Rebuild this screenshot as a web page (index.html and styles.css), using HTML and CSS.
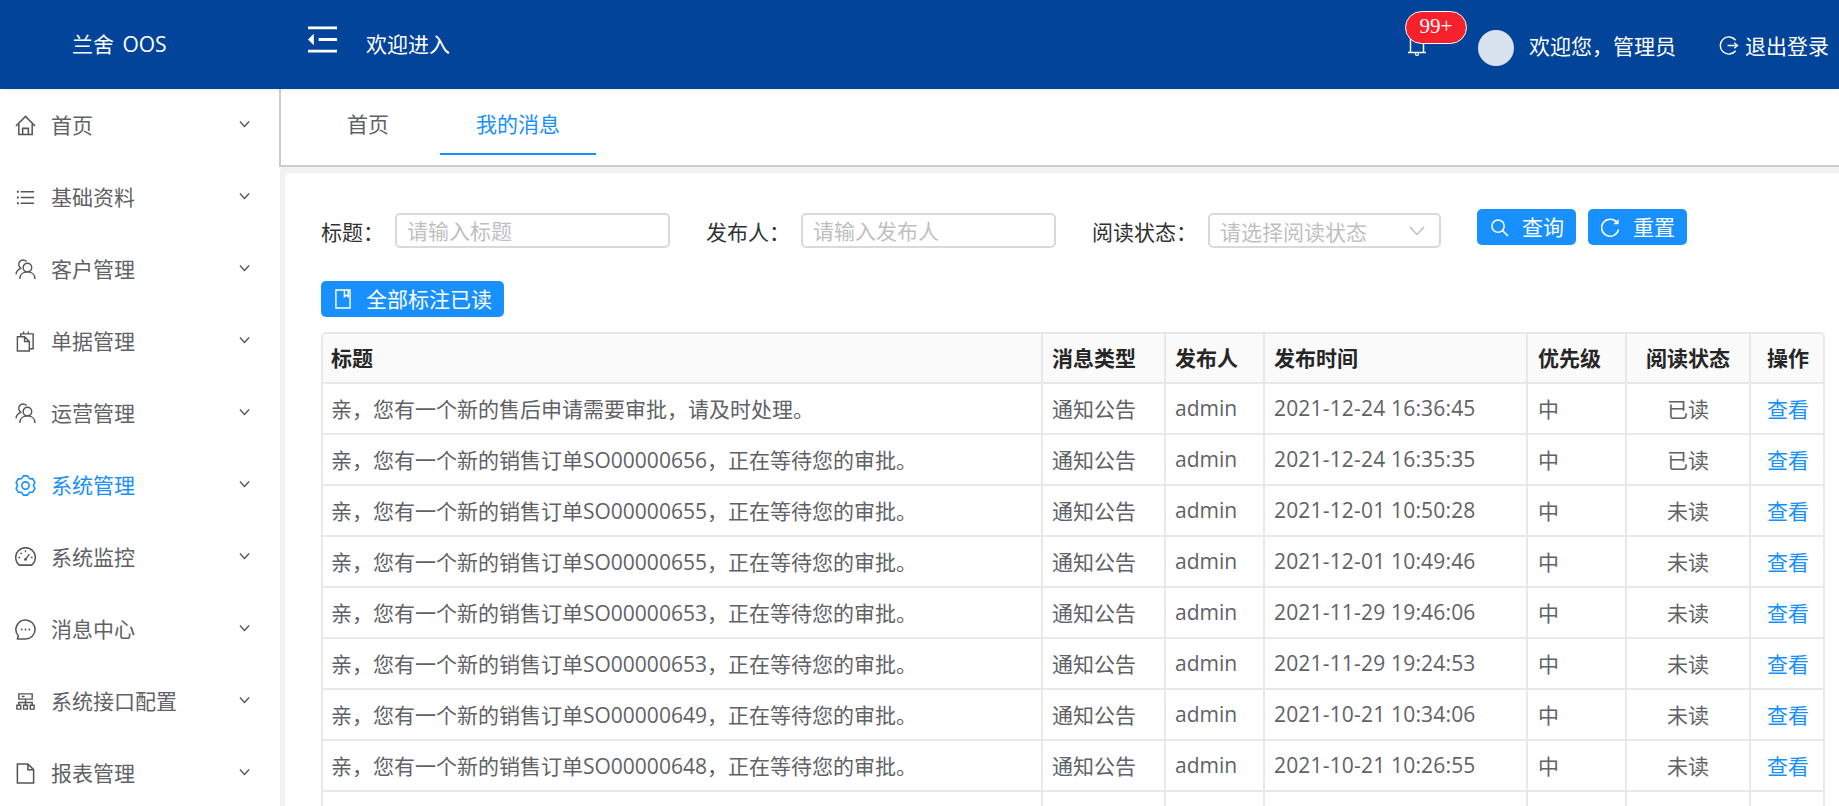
FILE: index.html
```html
<!DOCTYPE html>
<html lang="zh-CN">
<head>
<meta charset="utf-8">
<title>兰舍 OOS</title>
<link rel="stylesheet" href="styles.css">
</head>
<body>
<svg class="defs" width="0" height="0" aria-hidden="true">
  <symbol id="chev" viewBox="0 0 12 8"><path d="M1 1.2 6 6.6 11 1.2" fill="none" stroke="currentColor" stroke-width="1.5"/></symbol>
  <symbol id="users" viewBox="0 0 22 22"><circle cx="13" cy="9" r="4.5" fill="none" stroke="currentColor" stroke-width="1.5"/><path d="M5 21c0-5 3.500-7.500 8-7.500s8 2.500 8 7.500M12 2.600C11 1.500 9.500 1 8.500 1 5.500 1 3.500 3.500 4 6.500c.3 1.500 1 2.500 2 3.300C3 11 1.500 13 1 16" fill="none" stroke="currentColor" stroke-width="1.5"/></symbol>
</svg>
<header class="topbar">
  <div class="logo">兰舍 OOS</div>
  <svg class="fold" viewBox="0 0 30 27"><path d="M0 1.5H30M11 13.5H30M0 25.5H30" fill="none" stroke="#fff" stroke-width="3"/><path d="M6 7.5 0 13.500 6 19.500Z" fill="#fff"/></svg>
  <div class="welcome">欢迎进入</div>
  <div class="top-right">
    <div class="bell-wrap">
      <svg class="bell" viewBox="0 0 18 18"><path d="M2.500 0V14.500M15.500 0V14.500M0 14.500H18" fill="none" stroke="#fff" stroke-width="1.5"/><circle cx="9" cy="16" r="1.500" fill="none" stroke="#fff" stroke-width="1.200"/></svg>
      <span class="badge">99+</span>
    </div>
    <span class="avatar"></span>
    <span class="user">欢迎您，管理员</span>
    <svg class="logout" viewBox="0 0 22 22"><path d="M18.500 5.500A9 9 0 1 0 18.500 16.500" fill="none" stroke="#fff" stroke-width="1.500"/><path d="M10 11H20M17 8l3.500 3-3.500 3" fill="none" stroke="#fff" stroke-width="1.400"/></svg>
    <span class="exit">退出登录</span>
  </div>
</header>
<div class="body">
  <nav class="side">
    <div class="item"><svg class="ico" viewBox="0 0 22 22"><path d="M1 11.500 11 1.500l10 10M4 9.500V20.500H18V9.500M8 20.500V14H14V20.500" fill="none" stroke="currentColor" stroke-width="1.600"/></svg><span>首页</span><svg class="chev"><use href="#chev"/></svg></div>
    <div class="item"><svg class="ico" viewBox="0 0 22 22"><path d="M6 5H20M6 11H20M6 17H20" fill="none" stroke="currentColor" stroke-width="1.500"/><path d="M2 4h2v2H2zM2 10h2v2H2zM2 16h2v2H2z" fill="currentColor"/></svg><span>基础资料</span><svg class="chev"><use href="#chev"/></svg></div>
    <div class="item"><svg class="ico"><use href="#users"/></svg><span>客户管理</span><svg class="chev"><use href="#chev"/></svg></div>
    <div class="item"><svg class="ico" viewBox="0 0 22 22"><path d="M6 6V3H19V18.500H15M2.500 6H10L15 11V21H2.500ZM10 6V11H15M9 .5V3M14 .5V3" fill="none" stroke="currentColor" stroke-width="1.500"/></svg><span>单据管理</span><svg class="chev"><use href="#chev"/></svg></div>
    <div class="item"><svg class="ico"><use href="#users"/></svg><span>运营管理</span><svg class="chev"><use href="#chev"/></svg></div>
    <div class="item active"><svg class="ico" viewBox="0 0 22 22"><path d="M8.860.93 13.140.93 15.150 3.810 18.650 4.110 20.800 7.820 19.300 11 20.800 14.180 18.650 17.890 15.150 18.190 13.140 21.070 8.860 21.070 6.850 18.190 3.350 17.890 1.200 14.180 2.700 11 1.200 7.820 3.350 4.110 6.850 3.810Z" fill="none" stroke="currentColor" stroke-width="1.700" stroke-linejoin="round"/><circle cx="11" cy="11" r="3.800" fill="none" stroke="currentColor" stroke-width="1.700"/></svg><span>系统管理</span><svg class="chev"><use href="#chev"/></svg></div>
    <div class="item"><svg class="ico" viewBox="0 0 22 22"><path d="M4.500 19A10.300 10.300 0 1 1 17.500 19Z" fill="none" stroke="currentColor" stroke-width="1.600" stroke-linejoin="round"/><path d="M11 13 15 7.500M11 3.500V5.500M3.500 11H5.500M16.500 11H18.500M5.800 6 7.200 7.300" fill="none" stroke="currentColor" stroke-width="1.400"/><circle cx="11" cy="13" r="1.500" fill="currentColor"/></svg><span>系统监控</span><svg class="chev"><use href="#chev"/></svg></div>
    <div class="item"><svg class="ico" viewBox="0 0 22 22"><path d="M11 1A10 10 0 1 1 11 21H2.500L3.500 17.600A10 10 0 0 1 11 1Z" fill="none" stroke="currentColor" stroke-width="1.600" stroke-linejoin="round"/><circle cx="7" cy="11" r="1" fill="currentColor"/><circle cx="11" cy="11" r="1" fill="currentColor"/><circle cx="15" cy="11" r="1" fill="currentColor"/></svg><span>消息中心</span><svg class="chev"><use href="#chev"/></svg></div>
    <div class="item"><svg class="ico" viewBox="0 0 22 22"><path d="M4 3h14v5.500H4zM2 15h4v4H2zM9 15h4v4H9zM16 15h4v4h-4z" fill="none" stroke="currentColor" stroke-width="1.500"/><path d="M11 8.500V15M4 15V12H18V15M7 5.800h3" fill="none" stroke="currentColor" stroke-width="1.500"/></svg><span>系统接口配置</span><svg class="chev"><use href="#chev"/></svg></div>
    <div class="item"><svg class="ico" viewBox="0 0 22 22"><path d="M2.500 1H13.500L19.500 7V21H2.500ZM13.500 1V7H19.500" fill="none" stroke="currentColor" stroke-width="1.600"/></svg><span>报表管理</span><svg class="chev"><use href="#chev"/></svg></div>
  </nav>
  <main class="main">
    <div class="tabs">
      <div class="tab">首页</div>
      <div class="tab on">我的消息</div>
    </div>
    <div class="page">
      <section class="card">
        <form class="filters">
          <label class="lab l1">标题：</label>
          <input class="inp i1" placeholder="请输入标题">
          <label class="lab l2">发布人：</label>
          <input class="inp i2" placeholder="请输入发布人">
          <label class="lab l3">阅读状态：</label>
          <div class="inp sel"><span>请选择阅读状态</span><svg viewBox="0 0 16 10"><path d="M1 1 8 8.500 15 1" fill="none" stroke="#bfbfbf" stroke-width="1.500"/></svg></div>
          <button type="button" class="btn q"><svg viewBox="0 0 20 20"><circle cx="8.500" cy="8.500" r="6.500" fill="none" stroke="#fff" stroke-width="1.600"/><path d="M13 13 19 19" stroke="#fff" stroke-width="1.600"/></svg>查询</button>
          <button type="button" class="btn r"><svg viewBox="0 0 20 20"><path d="M17 5A9 9 0 1 0 18.500 12" fill="none" stroke="#fff" stroke-width="1.600"/><path d="M18.500 1V6.500H13Z" fill="#fff"/></svg>重置</button>
        </form>
        <button type="button" class="btn all"><svg viewBox="0 0 17 21"><path d="M1 1H16V20H1ZM10 1V8L12 6.500 14 8V1" fill="none" stroke="#fff" stroke-width="1.500"/></svg>全部标注已读</button>
        <div class="tbl">
          <table>
            <colgroup><col class="c1"><col class="c2"><col class="c3"><col class="c4"><col class="c5"><col class="c6"><col class="c7"></colgroup>
            <thead><tr><th>标题</th><th>消息类型</th><th>发布人</th><th>发布时间</th><th class="pri">优先级</th><th class="ce">阅读状态</th><th class="ce">操作</th></tr></thead>
            <tbody>
              <tr><td>亲，您有一个新的售后申请需要审批，请及时处理。</td><td>通知公告</td><td>admin</td><td class="dt">2021-12-24 16:36:45</td><td class="pri">中</td><td class="ce">已读</td><td class="ce"><a>查看</a></td></tr>
              <tr><td>亲，您有一个新的销售订单SO00000656，正在等待您的审批。</td><td>通知公告</td><td>admin</td><td class="dt">2021-12-24 16:35:35</td><td class="pri">中</td><td class="ce">已读</td><td class="ce"><a>查看</a></td></tr>
              <tr><td>亲，您有一个新的销售订单SO00000655，正在等待您的审批。</td><td>通知公告</td><td>admin</td><td class="dt">2021-12-01 10:50:28</td><td class="pri">中</td><td class="ce">未读</td><td class="ce"><a>查看</a></td></tr>
              <tr><td>亲，您有一个新的销售订单SO00000655，正在等待您的审批。</td><td>通知公告</td><td>admin</td><td class="dt">2021-12-01 10:49:46</td><td class="pri">中</td><td class="ce">未读</td><td class="ce"><a>查看</a></td></tr>
              <tr><td>亲，您有一个新的销售订单SO00000653，正在等待您的审批。</td><td>通知公告</td><td>admin</td><td class="dt">2021-11-29 19:46:06</td><td class="pri">中</td><td class="ce">未读</td><td class="ce"><a>查看</a></td></tr>
              <tr><td>亲，您有一个新的销售订单SO00000653，正在等待您的审批。</td><td>通知公告</td><td>admin</td><td class="dt">2021-11-29 19:24:53</td><td class="pri">中</td><td class="ce">未读</td><td class="ce"><a>查看</a></td></tr>
              <tr><td>亲，您有一个新的销售订单SO00000649，正在等待您的审批。</td><td>通知公告</td><td>admin</td><td class="dt">2021-10-21 10:34:06</td><td class="pri">中</td><td class="ce">未读</td><td class="ce"><a>查看</a></td></tr>
              <tr><td>亲，您有一个新的销售订单SO00000648，正在等待您的审批。</td><td>通知公告</td><td>admin</td><td class="dt">2021-10-21 10:26:55</td><td class="pri">中</td><td class="ce">未读</td><td class="ce"><a>查看</a></td></tr>
              <tr><td></td><td></td><td></td><td></td><td></td><td></td><td></td></tr>
            </tbody>
          </table>
        </div>
      </section>
    </div>
  </main>
</div>
</body>
</html>
```
FILE: styles.css
```css
* { box-sizing: border-box; }
html, body { margin: 0; height: 806px; overflow: hidden; }
body {
  font-family: "Open Sans", "Noto Sans CJK SC", sans-serif;
  font-size: 21px;
  color: #606266;
  background: #fff;
}
.defs { position: absolute; }

/* top bar */
.topbar {
  height: 89px;
  background: #02449a;
  color: #fff;
  display: flex;
  align-items: center;
  position: relative;
  z-index: 1;
  box-shadow: 0 1px 4px rgba(0, 21, 41, .08);
}
.logo { width: 308px; padding: 0 0 4px 72px; word-spacing: 3px; }
.fold { width: 29px; height: 27px; margin: -11px 0 0; display: block; }
.welcome { margin-left: 29px; padding-bottom: 4px; }
.top-right { margin-left: auto; display: flex; align-items: center; padding-right: 10px; padding-top: 1px; }
.bell-wrap { position: relative; width: 18px; height: 18px; margin: 4px 52px 0 0; }
.bell { display: block; width: 18px; height: 18px; }
.badge {
  position: absolute;
  left: -3px;
  top: -27px;
  width: 62px;
  height: 33px;
  border-radius: 17px;
  background: #f5222d;
  border: 1.5px solid #fff;
  font-family: "Liberation Serif", serif;
  font-size: 21px;
  line-height: 29px;
  text-align: center;
}
.avatar { width: 36px; height: 36px; border-radius: 50%; background: #d9e2ef; margin-top: 6px; }
.user { margin-left: 15px; }
.logout { width: 21px; height: 21px; margin-left: 42px; }
.exit { margin-left: 6px; }

/* body */
.body { display: flex; height: 717px; }
.side { width: 280px; flex: none; padding-top: 1px; background: #fff; }
.item {
  height: 72px;
  display: flex;
  align-items: center;
  padding: 0 0 4px 15px;
  color: #606266;
  position: relative;
}
.item.active { color: #1890ff; }
.ico { width: 21px; height: 21px; margin: 2px 15px 0 0; flex: none; color: #555; }
.item.active .ico { color: #1890ff; }
.chev { position: absolute; left: 239px; top: 30px; width: 11px; height: 8px; color: #555; }

.main { flex: 1; min-width: 0; display: flex; flex-direction: column; }
.tabs {
  height: 78px;
  flex: none;
  display: flex;
  padding-left: 30px;
  border-left: 2px solid #ccc;
  border-bottom: 2px solid #ccc;
  margin-left: -1px;
  background: #fff;
}
.tab { width: 114px; height: 66px; line-height: 71px; text-align: center; color: #606266; }
.tab.on {
  width: 156px;
  margin-left: 15px;
  color: #1890ff;
  border-bottom: 2px solid #1890ff;
}
.page { flex: 1; min-height: 0; background: #f0f2f5; padding: 6px 0 0 5px; }
.card {
  height: 100%;
  background: #fff;
  border-radius: 5px 0 0 0;
  padding: 36px 14px 0 36px;
  overflow: hidden;
}

/* filters */
.filters { display: flex; align-items: flex-start; height: 36px; }
.lab { color: #303133; padding-top: 5px; line-height: 36px; white-space: nowrap; }
.l1 { width: 74px; }
.l2 { width: 95px; margin-left: 36px; }
.l3 { width: 116px; margin-left: 36px; }
.inp {
  height: 35px;
  margin-top: 4px;
  border: 2px solid #d9d9d9;
  border-radius: 5px;
  padding: 0 10px;
  font: inherit;
  color: #bfbfbf;
  background: #fff;
  outline: none;
}
.inp::placeholder { color: #bfbfbf; opacity: 1; }
.i1 { width: 275px; }
.i2 { width: 255px; }
.sel { width: 233px; display: flex; align-items: center; justify-content: space-between; padding-right: 14px; white-space: nowrap; }
.sel svg { width: 16px; height: 10px; flex: none; }
.btn {
  height: 36px;
  border: 0;
  border-radius: 5px;
  background: #1890ff;
  color: #fff;
  font: inherit;
  display: flex;
  align-items: center;
  padding: 0 0 2px;
  white-space: nowrap;
}
.btn svg { flex: none; margin-top: 2px; }
.q { width: 99px; margin-left: 36px; padding-left: 13px; }
.r { width: 99px; margin-left: 12px; padding-left: 13px; }
.q svg, .r svg { width: 19px; height: 19px; margin-right: 13px; }
.all { width: 183px; margin-top: 36px; padding-left: 14px; }
.all svg { width: 16px; height: 20px; margin-right: 15px; }

/* table */
.tbl {
  margin-top: 15px;
  border: 2px solid #e8e8e8;
  border-bottom: 0;
  border-radius: 5px 5px 0 0;
  overflow: hidden;
}
table { width: 100%; table-layout: fixed; border-collapse: separate; border-spacing: 0; }
.c1 { width: 720px; }
.c2 { width: 123px; }
.c3 { width: 99px; }
.c4 { width: 263px; }
.c5 { width: 99px; }
.c6 { width: 124px; }
.c7 { width: 74px; }
th, td {
  padding: 0 9px 2px;
  text-align: left;
  border-right: 2px solid #e8e8e8;
  border-bottom: 2px solid #e8e8e8;
  white-space: nowrap;
  overflow: hidden;
}
th:first-child, td:first-child { padding-left: 8px; }
th:last-child, td:last-child { border-right: 0; }
th { height: 50px; background: #fafafa; color: #262626; font-weight: 700; }
td { height: 51px; color: #606266; }
.dt { letter-spacing: .18px; }
.pri { padding-left: 10px; }
.ce { text-align: center; }
a { color: #1890ff; }
```
